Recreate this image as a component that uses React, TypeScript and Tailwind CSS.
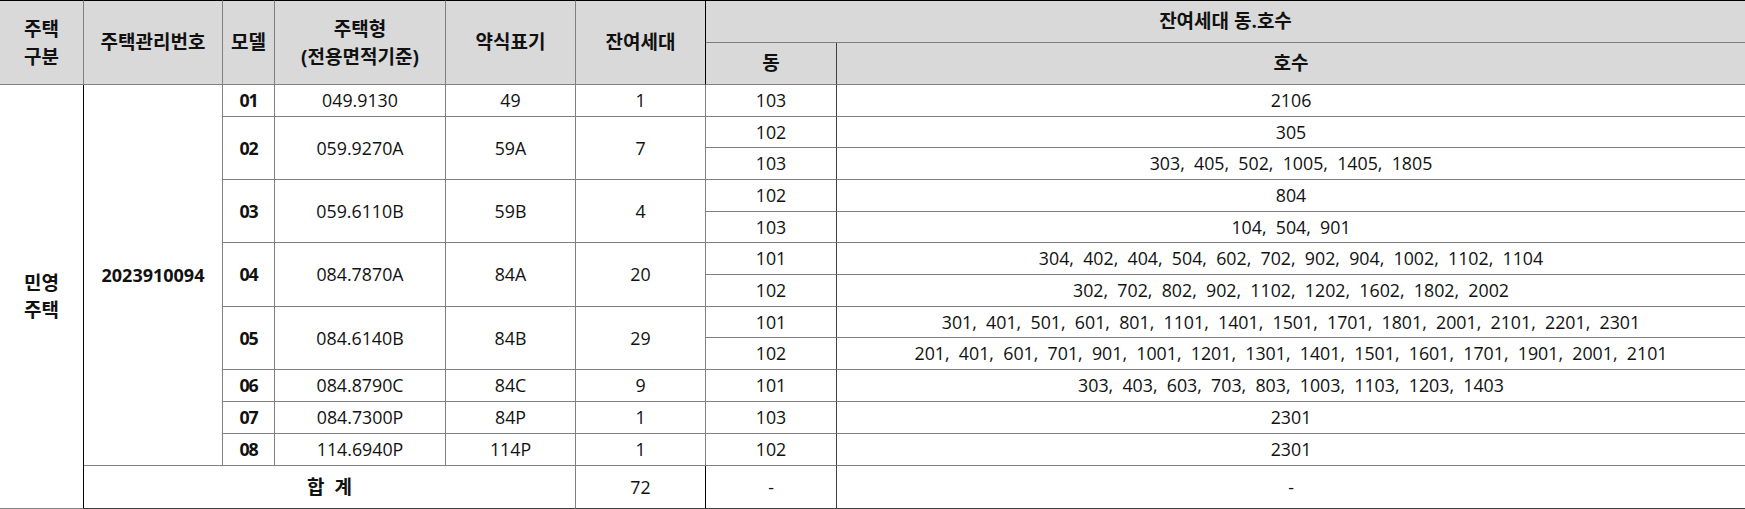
import React from "react";

type Sub = { dong: string; hosu: number[] };
type Model = { no: string; type: string; short: string; count: number; subs: Sub[] };

const models: Model[] = [
  { no: "01", type: "049.9130", short: "49", count: 1, subs: [{ dong: "103", hosu: [2106] }] },
  {
    no: "02",
    type: "059.9270A",
    short: "59A",
    count: 7,
    subs: [
      { dong: "102", hosu: [305] },
      { dong: "103", hosu: [303, 405, 502, 1005, 1405, 1805] },
    ],
  },
  {
    no: "03",
    type: "059.6110B",
    short: "59B",
    count: 4,
    subs: [
      { dong: "102", hosu: [804] },
      { dong: "103", hosu: [104, 504, 901] },
    ],
  },
  {
    no: "04",
    type: "084.7870A",
    short: "84A",
    count: 20,
    subs: [
      { dong: "101", hosu: [304, 402, 404, 504, 602, 702, 902, 904, 1002, 1102, 1104] },
      { dong: "102", hosu: [302, 702, 802, 902, 1102, 1202, 1602, 1802, 2002] },
    ],
  },
  {
    no: "05",
    type: "084.6140B",
    short: "84B",
    count: 29,
    subs: [
      { dong: "101", hosu: [301, 401, 501, 601, 801, 1101, 1401, 1501, 1701, 1801, 2001, 2101, 2201, 2301] },
      { dong: "102", hosu: [201, 401, 601, 701, 901, 1001, 1201, 1301, 1401, 1501, 1601, 1701, 1901, 2001, 2101] },
    ],
  },
  {
    no: "06",
    type: "084.8790C",
    short: "84C",
    count: 9,
    subs: [{ dong: "101", hosu: [303, 403, 603, 703, 803, 1003, 1103, 1203, 1403] }],
  },
  { no: "07", type: "084.7300P", short: "84P", count: 1, subs: [{ dong: "103", hosu: [2301] }] },
  { no: "08", type: "114.6940P", short: "114P", count: 1, subs: [{ dong: "102", hosu: [2301] }] },
];

const rowH = ["h-[32px]", "h-[31px]", "h-[32px]", "h-[32px]", "h-[31px]", "h-[32px]", "h-[32px]", "h-[31px]", "h-[32px]", "h-[32px]", "h-[32px]", "h-[32px]"];

// every cell draws only its right and bottom edge
const cell = "border-r border-b border-[#808080] text-center align-middle p-0";
const head = `${cell} bg-[#d9d9d9] font-bold text-[19px]`;

export default function App() {
  let idx = 0;
  const body: React.ReactNode[] = [];

  models.forEach((m, mi) => {
    m.subs.forEach((s, si) => {
      const first = si === 0;
      const h = rowH[idx++];
      body.push(
        <tr key={`${m.no}-${s.dong}`} className={h}>
          {mi === 0 && first && (
            <>
              <td rowSpan={13} className={`${cell} border-r-black font-bold text-[19px] leading-[27px]`}>
                민영
                <br />
                주택
              </td>
              <td rowSpan={12} className={`${cell} font-bold text-[18px]`}>
                2023910094
              </td>
            </>
          )}
          {first && (
            <>
              <td rowSpan={m.subs.length} className={`${cell} font-bold tracking-[-0.06em]`}>
                {m.no}
              </td>
              <td rowSpan={m.subs.length} className={cell}>
                {m.type}
              </td>
              <td rowSpan={m.subs.length} className={cell}>
                {m.short}
              </td>
              <td rowSpan={m.subs.length} className={cell}>
                {m.count}
              </td>
            </>
          )}
          <td className={`${cell} border-r-[#404040]`}>{s.dong}</td>
          <td className={`${cell} border-r-0 whitespace-pre`}>{s.hosu.join(",  ")}</td>
        </tr>
      );
    });
  });

  return (
    <div className="w-[1745px] h-[509px] bg-white text-[17.8px] text-[#111] font-['Open_Sans','Noto_Sans_CJK_KR',sans-serif]">
      <table className="w-[1745px] table-fixed border-separate border-spacing-0">
        <colgroup>
          <col className="w-[84px]" />
          <col className="w-[139px]" />
          <col className="w-[52px]" />
          <col className="w-[171px]" />
          <col className="w-[130px]" />
          <col className="w-[130px]" />
          <col className="w-[131px]" />
          <col className="w-[908px]" />
        </colgroup>
        <thead>
          <tr className="h-[43px]">
            <th rowSpan={2} className={`${head} border-t border-t-black leading-[28px]`}>
              주택
              <br />
              구분
            </th>
            <th rowSpan={2} className={`${head} border-t border-t-black`}>
              주택관리번호
            </th>
            <th rowSpan={2} className={`${head} border-t border-t-black`}>
              모델
            </th>
            <th rowSpan={2} className={`${head} border-t border-t-black leading-[28px]`}>
              주택형
              <br />
              (전용면적기준)
            </th>
            <th rowSpan={2} className={`${head} border-t border-t-black`}>
              약식표기
            </th>
            <th rowSpan={2} className={`${head} border-t border-t-black border-r-black`}>
              잔여세대
            </th>
            <th colSpan={2} className={`${head} border-t border-t-black border-r-0`}>
              잔여세대 동.호수
            </th>
          </tr>
          <tr className="h-[42px]">
            <th className={`${head} border-r-[#404040]`}>동</th>
            <th className={`${head} border-r-0`}>호수</th>
          </tr>
        </thead>
        <tbody>
          {body}
          <tr className="h-[43px]">
            <td colSpan={4} className={`${cell} border-b-[#404040] font-bold text-[19px]`}>
              합&nbsp;&nbsp;계
            </td>
            <td className={`${cell} border-b-[#404040] border-r-black`}>72</td>
            <td className={`${cell} border-b-[#404040] border-r-[#404040]`}>-</td>
            <td className={`${cell} border-b-[#404040] border-r-0`}>-</td>
          </tr>
        </tbody>
      </table>
    </div>
  );
}
